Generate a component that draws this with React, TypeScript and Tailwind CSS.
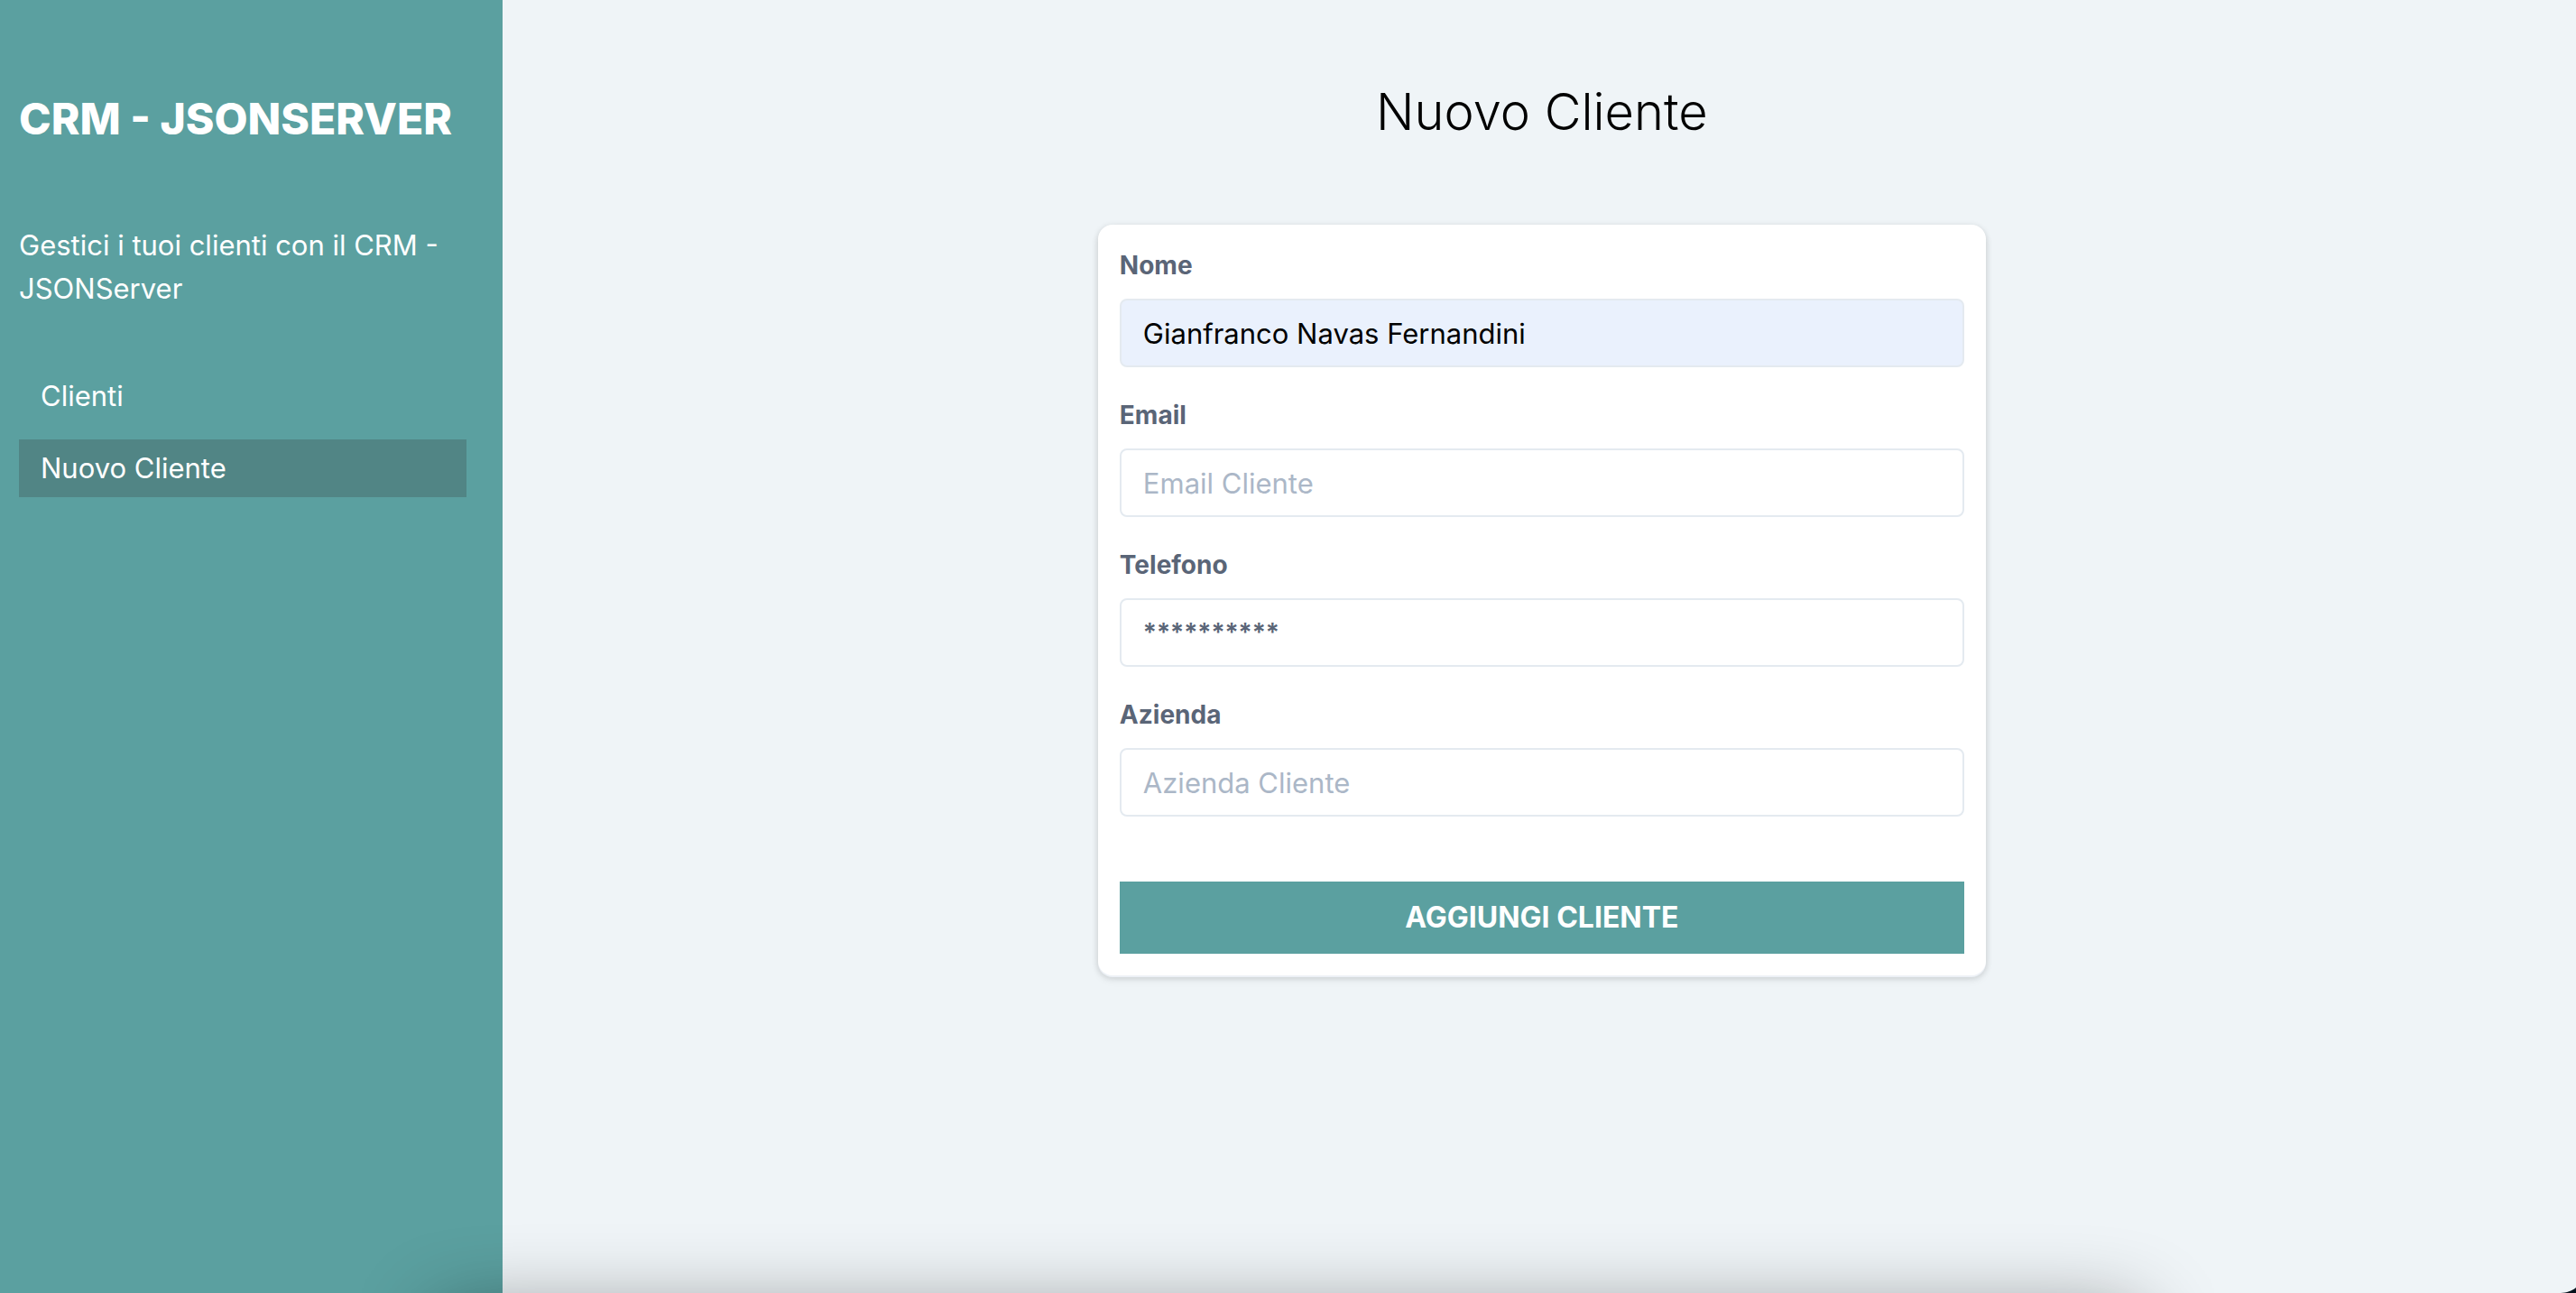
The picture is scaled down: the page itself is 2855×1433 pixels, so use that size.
import { useState } from "react";

type Field = {
  id: string;
  label: string;
  type: string;
  placeholder: string;
  look: string;
};

const fields: Field[] = [
  {
    id: "nome",
    label: "Nome",
    type: "text",
    placeholder: "Nome Cliente",
    look: "bg-[#eaf1fd] text-[31px] text-black",
  },
  {
    id: "email",
    label: "Email",
    type: "email",
    placeholder: "Email Cliente",
    look: "bg-white text-[31px] text-[#5a6577]",
  },
  {
    id: "telefono",
    label: "Telefono",
    type: "tel",
    placeholder: "Telefono Cliente",
    look: "bg-white text-[28px] font-semibold text-[#5a6577]",
  },
  {
    id: "azienda",
    label: "Azienda",
    type: "text",
    placeholder: "Azienda Cliente",
    look: "bg-white text-[31px] text-[#5a6577]",
  },
];

function Sidebar() {
  return (
    <aside className="w-[19.5%] shrink-0 bg-[#5ba0a0] pt-24 pr-10 pl-[21px] text-white">
      <h1 className="text-[48px] leading-[72px] font-extrabold whitespace-nowrap">CRM - JSONSERVER</h1>
      <p className="mt-20 text-[31px] leading-[48px]">Gestici i tuoi clienti con il CRM - JSONServer</p>
      <nav className="mt-[63px] flex flex-col gap-4 text-[31px] leading-[48px]">
        <a href="#clienti" className="px-6 py-2">
          Clienti
        </a>
        <a href="#nuovo" aria-current="page" className="bg-[#518585] px-6 py-2">
          Nuovo Cliente
        </a>
      </nav>
    </aside>
  );
}

function ClientForm() {
  const [values, setValues] = useState<Record<string, string>>({
    nome: "Gianfranco Navas Fernandini",
    email: "",
    telefono: "**********",
    azienda: "",
  });

  return (
    <form
      onSubmit={(e) => e.preventDefault()}
      className="mt-20 flex w-full max-w-[984px] flex-col rounded-2xl bg-white p-6 shadow-[0_2px_0_#edf1f6,0_2px_6px_1px_rgba(0,0,0,0.12),0_6px_10px_rgba(0,0,0,0.05)]"
    >
      <div className="flex flex-col gap-8">
        {fields.map((f) => (
          <div key={f.id} className="flex flex-col gap-4">
            <label htmlFor={f.id} className="text-[28px] leading-[42px] font-bold text-[#5a6577]">
              {f.label}
            </label>
            <input
              id={f.id}
              name={f.id}
              type={f.type}
              placeholder={f.placeholder}
              value={values[f.id]}
              autoComplete="off"
              onChange={(e) => setValues({ ...values, [f.id]: e.target.value })}
              className={`h-[76px] w-full rounded-lg border-2 border-[#e4eaf0] px-6 placeholder:text-[#abb7c7] ${f.look}`}
            />
          </div>
        ))}
      </div>
      <button type="submit" className="mt-[72px] h-20 w-full bg-[#5ba0a0] text-[32px] font-bold text-white uppercase">
        Aggiungi Cliente
      </button>
    </form>
  );
}

export default function App() {
  return (
    <div className="relative flex min-h-screen overflow-hidden bg-[#eff4f7] font-['Inter',sans-serif]">
      <Sidebar />
      <main className="flex flex-1 flex-col items-center pt-[79px] pl-[6px]">
        <h2 className="text-[56px] leading-[90px] font-light text-black">Nuovo Cliente</h2>
        <ClientForm />
      </main>
      <div className="pointer-events-none absolute top-full right-[17%] left-[17%] h-40 shadow-[0_24px_90px_rgba(0,0,0,0.46)]" />
      <svg className="pointer-events-none absolute right-0 bottom-0 h-[6px] w-[17px]" viewBox="0 0 17 6" aria-hidden="true">
        <path d="M0 6 C7 5.6 12 4 17 0 V6 Z" fill="#06131c" />
      </svg>
    </div>
  );
}
